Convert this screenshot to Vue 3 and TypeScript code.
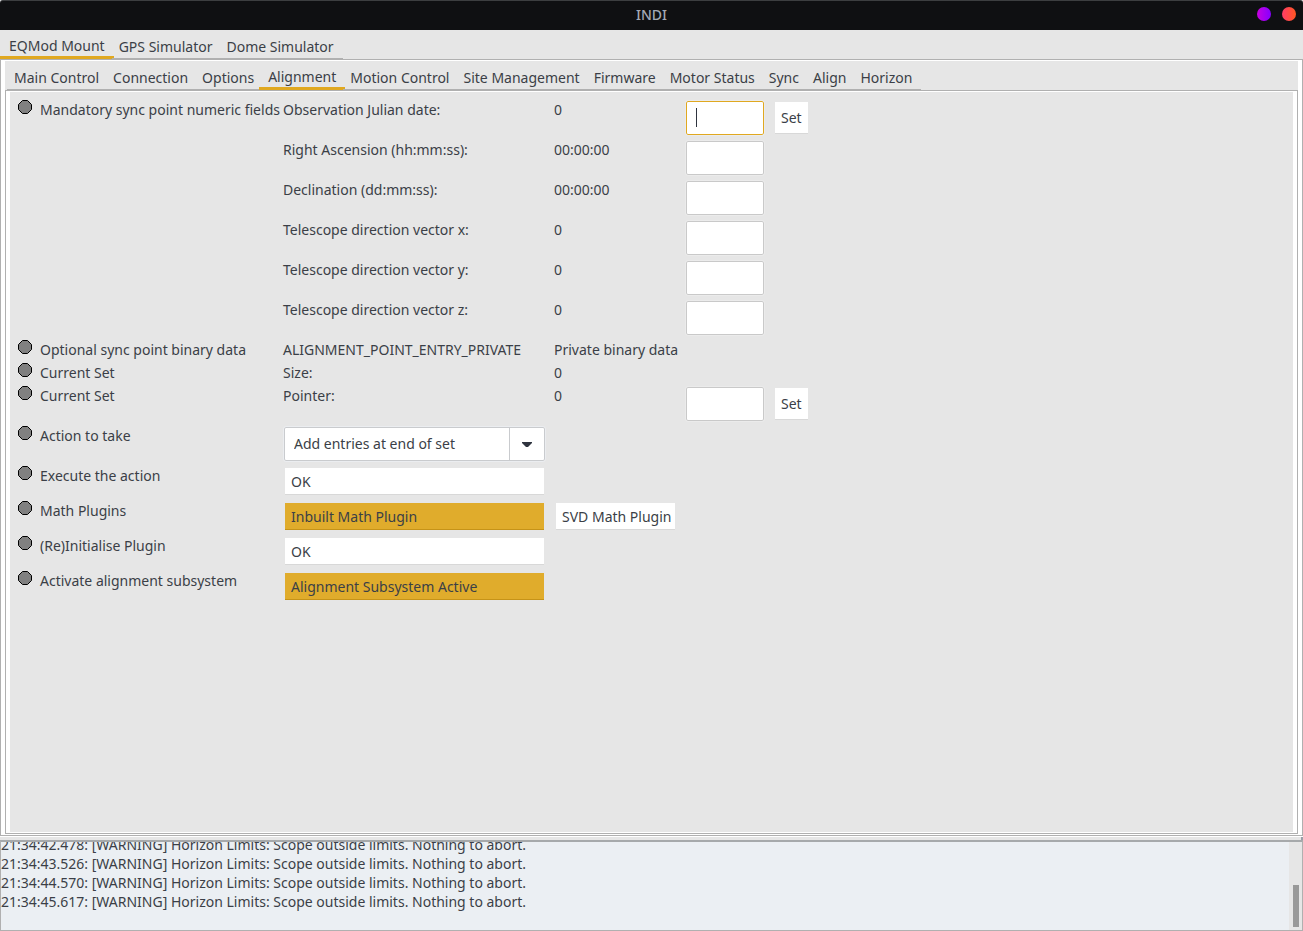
<script setup lang="ts">
import { ref } from 'vue'

interface NumberRow {
  id: string
  group?: string
  name: string
  value: string
  input: boolean
  set?: boolean
}

const devices = ['EQMod Mount', 'GPS Simulator', 'Dome Simulator']
const pages = [
  'Main Control', 'Connection', 'Options', 'Alignment', 'Motion Control',
  'Site Management', 'Firmware', 'Motor Status', 'Sync', 'Align', 'Horizon',
]
const device = ref('EQMod Mount')
const page = ref('Alignment')
const action = ref('Add entries at end of set')
const focused = ref('julian')

const numberRows: NumberRow[] = [
  { id: 'julian', group: 'Mandatory sync point numeric fields', name: 'Observation Julian date:', value: '0', input: true, set: true },
  { id: 'ra', name: 'Right Ascension (hh:mm:ss):', value: '00:00:00', input: true },
  { id: 'dec', name: 'Declination (dd:mm:ss):', value: '00:00:00', input: true },
  { id: 'vx', name: 'Telescope direction vector x:', value: '0', input: true },
  { id: 'vy', name: 'Telescope direction vector y:', value: '0', input: true },
  { id: 'vz', name: 'Telescope direction vector z:', value: '0', input: true },
  { id: 'blob', group: 'Optional sync point binary data', name: 'ALIGNMENT_POINT_ENTRY_PRIVATE', value: 'Private binary data', input: false },
  { id: 'size', group: 'Current Set', name: 'Size:', value: '0', input: false },
  { id: 'pointer', group: 'Current Set', name: 'Pointer:', value: '0', input: true, set: true },
]

const switchRows = [
  { group: 'Execute the action', options: [{ text: 'OK', on: false }] },
  { group: 'Math Plugins', options: [{ text: 'Inbuilt Math Plugin', on: true }, { text: 'SVD Math Plugin', on: false }] },
  { group: '(Re)Initialise Plugin', options: [{ text: 'OK', on: false }] },
  { group: 'Activate alignment subsystem', options: [{ text: 'Alignment Subsystem Active', on: true }] },
]

const log = ['21:34:42.478', '21:34:43.526', '21:34:44.570', '21:34:45.617']
</script>

<template>
  <div class="window">
    <header class="titlebar">
      <h1>INDI</h1>
      <div class="window-buttons">
        <button class="minimise" aria-label="Minimise"></button>
        <button class="close" aria-label="Close"></button>
      </div>
    </header>

    <nav class="tabs outer" role="tablist">
      <button v-for="d in devices" :key="d" role="tab" class="tab" :class="{ active: d === device }" :aria-selected="d === device" @click="device = d">{{ d }}</button>
    </nav>
    <main class="frame outer-frame">
      <nav class="tabs inner" role="tablist">
        <button v-for="p in pages" :key="p" role="tab" class="tab" :class="{ active: p === page }" :aria-selected="p === page" @click="page = p">{{ p }}</button>
      </nav>
      <section class="frame inner-frame">
        <form class="form" @submit.prevent>
          <div v-for="row in numberRows" :key="row.id" class="row">
            <svg v-if="row.group" class="led" viewBox="0 0 14 14" aria-hidden="true"><path d="M4.5 .5H9.5L13.5 4.5V9.5L9.5 13.5H4.5L.5 9.5V4.5Z" /></svg>
            <span class="group">{{ row.group }}</span>
            <label class="name" :for="row.input ? row.id : undefined">{{ row.name }}</label>
            <span class="value">{{ row.value }}</span>
            <span v-if="row.input" class="entry">
              <input :id="row.id" type="text" :class="{ focused: row.id === focused }" @focus="focused = row.id">
              <span v-if="row.id === focused" class="caret"></span>
            </span>
            <button v-if="row.set" class="push set" type="button">Set</button>
          </div>

          <div class="row">
            <svg class="led" viewBox="0 0 14 14" aria-hidden="true"><path d="M4.5 .5H9.5L13.5 4.5V9.5L9.5 13.5H4.5L.5 9.5V4.5Z" /></svg>
            <label class="group" for="action">Action to take</label>
            <span class="combo">
              <select id="action" v-model="action">
                <option>Add entries at end of set</option>
              </select>
              <span class="arrow"><svg viewBox="0 0 10 5" aria-hidden="true"><path d="M0 0H10V1L6 5H4L0 1Z" /></svg></span>
            </span>
          </div>

          <div v-for="row in switchRows" :key="row.group" class="row">
            <svg class="led" viewBox="0 0 14 14" aria-hidden="true"><path d="M4.5 .5H9.5L13.5 4.5V9.5L9.5 13.5H4.5L.5 9.5V4.5Z" /></svg>
            <span class="group">{{ row.group }}</span>
            <button v-for="(o, i) in row.options" :key="o.text" type="button" class="push" :class="[i ? 'second' : 'first', { on: o.on }]" :aria-pressed="o.on">{{ o.text }}</button>
          </div>
        </form>
      </section>
    </main>

    <div class="sash"><span></span></div>
    <footer class="log">
      <div class="lines">
        <p v-for="t in log" :key="t">{{ t }}: [WARNING] Horizon Limits: Scope outside limits. Nothing to abort.</p>
      </div>
      <div class="scrollbar"><div class="thumb"></div></div>
    </footer>
  </div>
</template>

<style>
body { margin: 0; background: #e6e6e6; }
</style>

<style scoped>
* { box-sizing: border-box; }
.window {
  display: flex;
  flex-direction: column;
  height: 100vh;
  background: #e6e6e6;
  color: #3b3f47;
  font: 14px/23px "Noto Sans", sans-serif;
}
button, input, select { font: inherit; color: inherit; margin: 0; }
.titlebar {
  display: grid;
  grid-template-columns: 1fr auto 1fr;
  align-items: start;
  height: 30px;
  flex: none;
  background: #0f1012;
  border-top: 1px solid #3c3e40;
  border-radius: 3px 3px 0 0;
}
h1 { grid-column: 2; margin: 0; font-size: 14px; font-weight: 500; line-height: 27px; color: #a3a9b5; }
.window-buttons { display: flex; justify-content: flex-end; gap: 11px; padding: 6px 7px 0 0; }
.window-buttons button { width: 14px; height: 14px; padding: 0; border: 0; border-radius: 50%; }
.minimise { background: linear-gradient(90deg, #c800e0, #8500ff); }
.close { background: linear-gradient(90deg, #ff3d68, #ff5722); }

.tabs { display: flex; flex: none; height: 29px; padding-left: 2px; }
.tab {
  padding: 5px 7px 0;
  border: 0;
  border-bottom: 1px solid #b0b0b0;
  background: none;
  line-height: 22px;
  white-space: nowrap;
}
.tab:last-child { padding-right: 9px; }
.tab.active { padding: 5px 9px 0; margin: 0 -2px; border-bottom: 3px solid #e0a820; }
.inner { background: #e6e6e6; }
.frame { display: flex; flex-direction: column; flex: 1; min-height: 0; border: 1px solid #b0b0b0; background: #fff; padding: 1px 4px; }
.form { flex: 1; min-height: 0; background: #e6e6e6; padding: 6px 8px; }

.row { display: grid; grid-template-columns: 22px 243px 271px 132px 89px auto 1fr; align-items: start; justify-items: start; white-space: nowrap; }
.led { grid-column: 1; width: 14px; height: 14px; margin-top: 2px; fill: #808080; stroke: #000; stroke-width: 1; }
.group { grid-column: 2; }
.name { grid-column: 3; }
.value { grid-column: 4; }
.entry { grid-column: 5; position: relative; display: flex; padding: 3px 0; }
.entry input {
  width: 78px;
  height: 34px;
  padding: 0 9px;
  border: 1px solid #c9c9c9;
  border-radius: 2px;
  background: #fff;
  outline: 1px solid #ebebeb;
  caret-color: transparent;
}
.entry input.focused { border-color: #e0a820; }
.caret { position: absolute; left: 10px; top: 10px; width: 1px; height: 19px; background: #2f343f; pointer-events: none; }
.push {
  height: 27px;
  margin: 4px 0;
  padding: 0 6px;
  border: 0;
  background: #fff;
  box-shadow: inset 0 -1px #d8d8d8;
  line-height: 27px;
  text-align: left;
}
.set { grid-column: 6; height: 32px; line-height: 32px; }
.first { grid-column: 3; width: 259px; margin-left: 2px; }
.second { grid-column: 4; grid-column-end: span 2; margin-left: 2px; padding-right: 4px; }
.on { background: #e0ac2c; box-shadow: inset 0 -1px #c69318; }
.combo {
  grid-column: 3;
  position: relative;
  display: flex;
  width: 261px;
  height: 34px;
  margin: 3px 1px;
}
.combo select {
  appearance: none;
  flex: 1;
  padding: 0 44px 1px 9px;
  border: 1px solid #c9cbce;
  border-radius: 2px;
  background: #fff;
  outline: 1px solid #ebedf0;
}
.arrow {
  position: absolute;
  inset: 1px 1px 1px auto;
  width: 35px;
  display: flex;
  align-items: center;
  justify-content: center;
  border-left: 1px solid #c9cbce;
  pointer-events: none;
}
.arrow svg { width: 10px; height: 5px; fill: #2f343f; }

.sash { display: flex; justify-content: flex-end; flex: none; height: 4px; border-top: 1px solid #fff; }
.sash span { width: 2px; background: #9a9fa8; }
.log { display: flex; flex: none; height: 91px; border: 1px solid #b0b0b0; border-top: 2px solid #a6a9ab; }
.lines { flex: 1; display: flex; flex-direction: column; justify-content: flex-end; overflow: hidden; padding-bottom: 19px; background: #ebeff3; }
.lines p { flex: none; margin: 0; line-height: 19px; white-space: nowrap; }
.scrollbar { display: flex; align-items: flex-end; width: 13px; padding: 0 3px 3px 4px; }
.thumb { width: 6px; height: 42px; background: #999; }
</style>
